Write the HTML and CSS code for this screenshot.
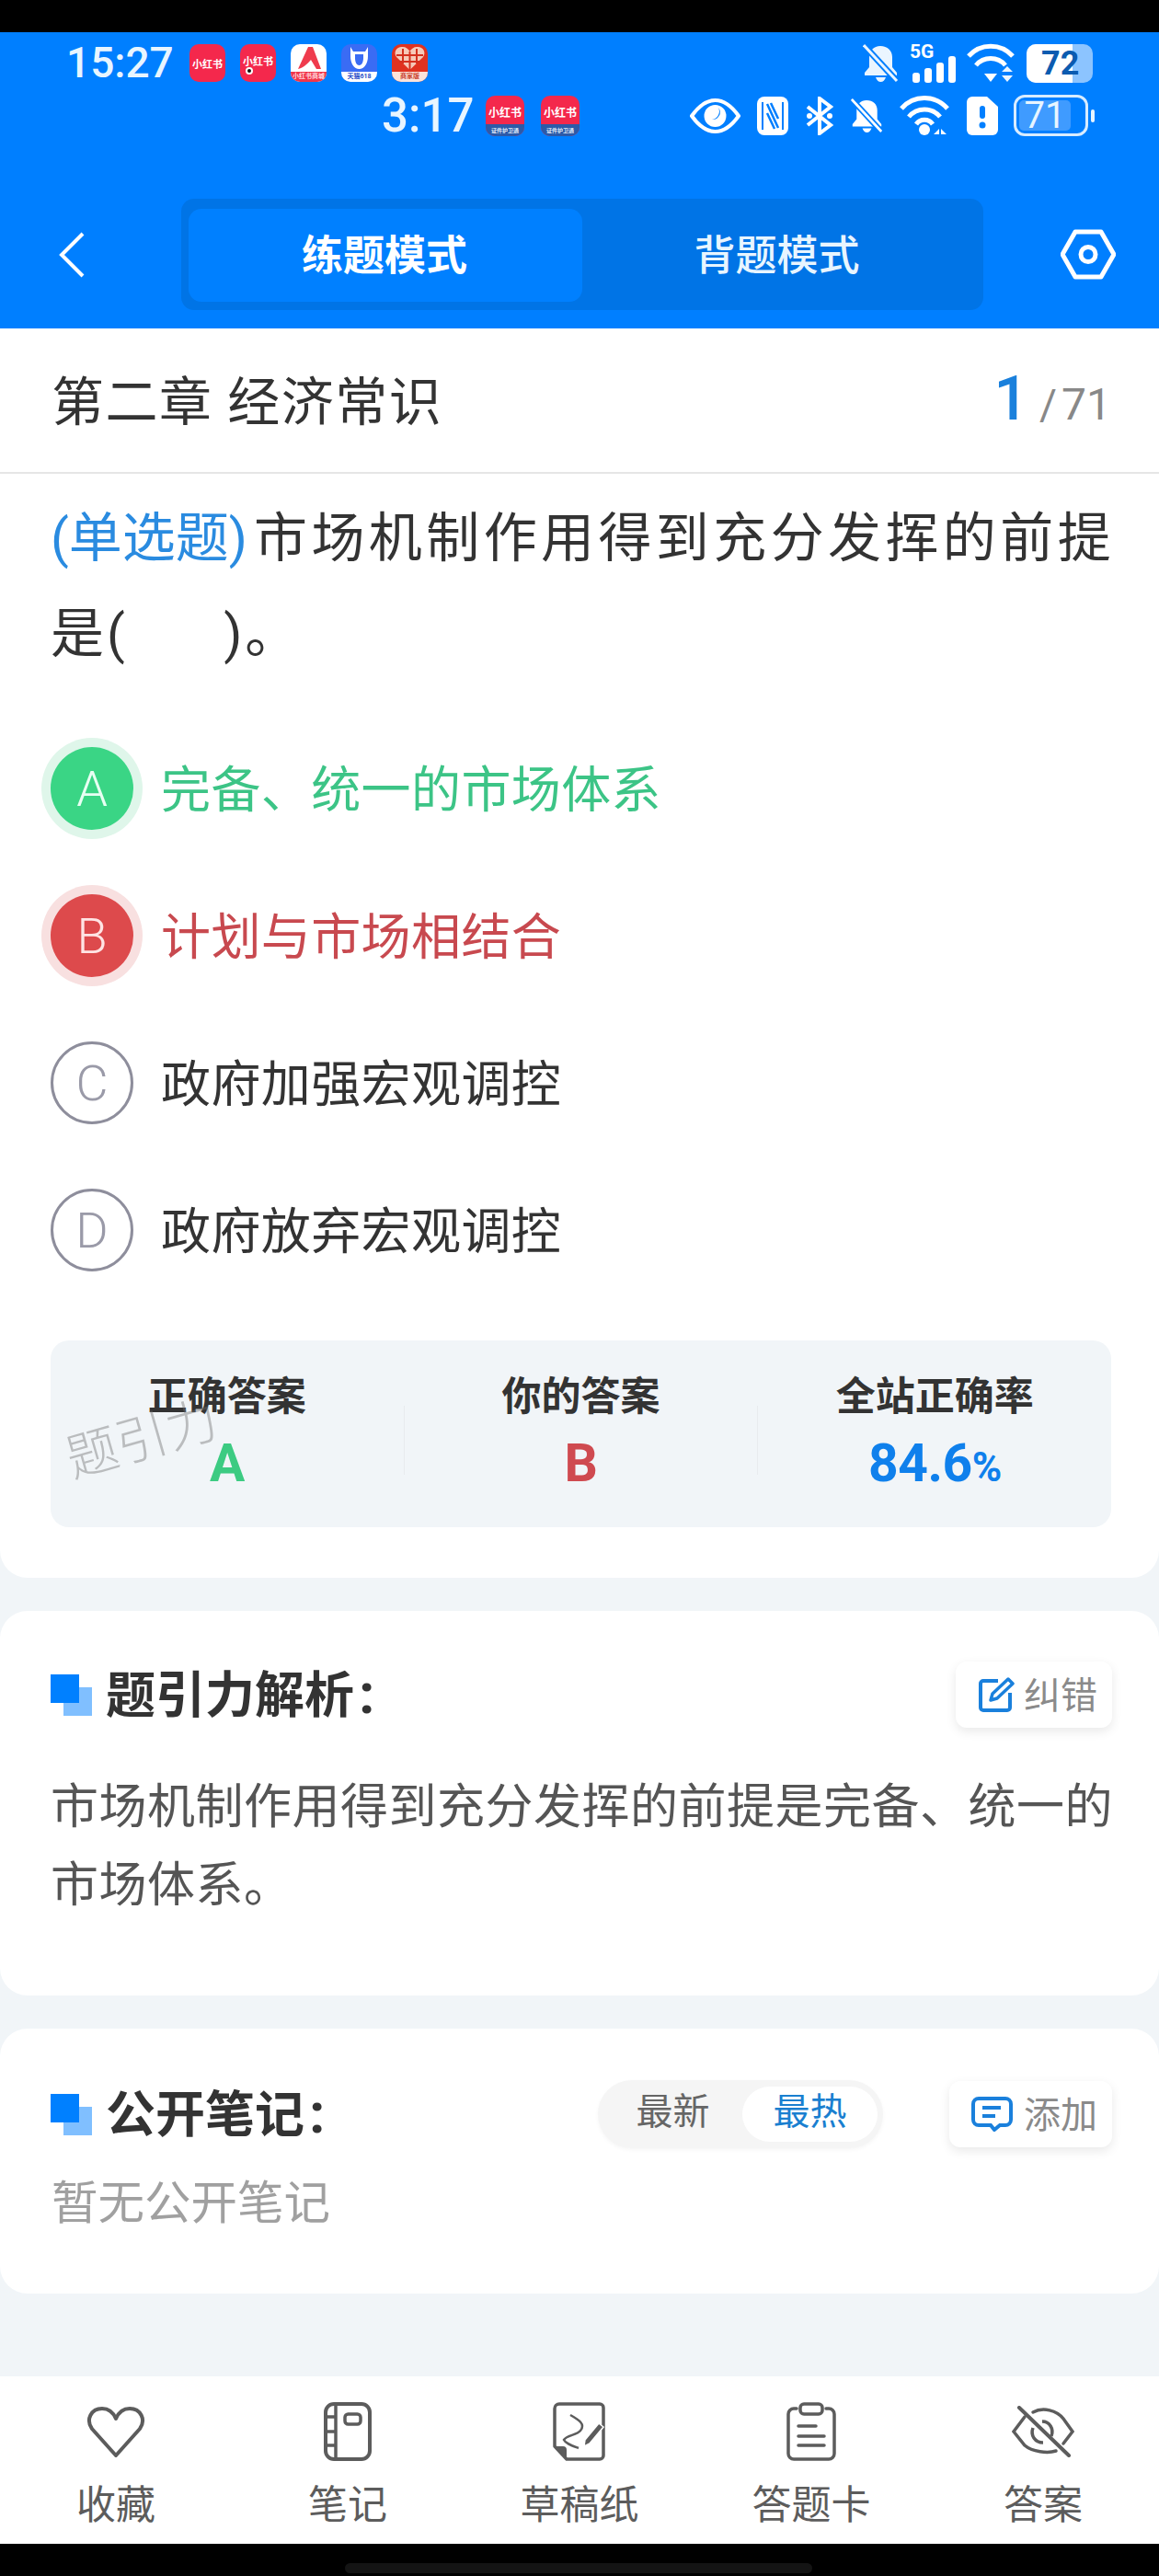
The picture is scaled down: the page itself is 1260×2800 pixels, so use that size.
FILE: index.html
```html
<!DOCTYPE html>
<html lang="zh-CN">
<head>
<meta charset="UTF-8">
<meta name="viewport" content="width=device-width, initial-scale=1.0">
<title>练题模式</title>
<link rel="stylesheet" href="styles.css">
</head>
<body>
<div class="top-black"></div>
<header class="header">
  <!-- first status bar -->
  <div class="status-row first">
    <span class="time">15:27</span>
    <div class="apps">
      <div class="app red">小红书</div>
      <div class="app red dotted">小红书<i class="dot"></i></div>
      <div class="app white-app">
        <svg width="39" height="30" viewBox="0 0 39 30"><path d="M8 27 L19 3 h5 L33 27 h-5 L22 17 C18 22 13 26 8 27z" fill="#ef3b4d"/></svg>
        <span class="strip strip-red">小红书商城</span>
      </div>
      <div class="app blue-app">
        <svg width="39" height="30" viewBox="0 0 39 30"><path d="M10 3 l3 5 h13 l3 -5 v10 c0 8 -4 14 -9.500 14 s-9.500 -6 -9.500 -14z M15 11 v4 c0 5 2 8 4.500 8 s4.500 -3 4.500 -8 v-4z" fill="#fff" fill-rule="evenodd"/></svg>
        <span class="strip strip-white">天猫618</span>
      </div>
      <div class="app heart-app">
        <svg width="39" height="30" viewBox="0 0 39 30"><path d="M19.500 28 L5 14 C1 8 6 2 12 3 c3 0 6 2 7.500 5 C21 5 24 3 27 3 c6 -1 11 5 7 11z" fill="#f6c9b8"/><path d="M12 5 v16 M19.500 8 v20 M27 5 v16 M5 12 h29 M8 19 h23" stroke="#d5311f" stroke-width="2"/></svg>
        <span class="strip strip-pale">商家版</span>
      </div>
    </div>
    <div class="status-icons gap-first">
      <svg width="39" height="43" viewBox="0 0 39 43"><path d="M19 3 c-7 0 -12 5 -12 12 v11 l-5 6 v3 h35 v-3 l-5 -6 v-11 c0 -7 -5 -12 -13 -12z M14 37 h11 c-1 3 -3 5 -5.500 5 s-4.500 -2 -5.500 -5z" fill="#eaf5ff"/><path d="M2 3 L37 41" stroke="#007fff" stroke-width="7"/><path d="M1 2 L37 41" stroke="#eaf5ff" stroke-width="3"/></svg>
      <div class="signal">
        <span class="five-g">5G</span>
        <svg width="47" height="29" viewBox="0 0 47 29"><rect x="0" y="18" width="8" height="11" rx="3" fill="#fff"/><rect x="13" y="13" width="8" height="16" rx="3" fill="#fff"/><rect x="26" y="7" width="8" height="22" rx="3" fill="#fff"/><rect x="39" y="0" width="8" height="29" rx="3" fill="#fff"/></svg>
      </div>
      <svg width="53" height="43" viewBox="0 0 53 43"><path d="M2 14 A32 32 0 0 1 50 14" fill="none" stroke="#fff" stroke-width="5"/><path d="M10 24 A21 21 0 0 1 42 24" fill="none" stroke="#fff" stroke-width="5"/><path d="M19 33 h14 l-7 9z" fill="#fff"/><path d="M38 31 h12 l-6 -6z M38 35 h12 l-6 7z" fill="#eaf5ff"/></svg>
      <div class="battery-solid"><span class="battery-fill">72</span></div>
    </div>
  </div>

  <!-- second status bar -->
  <div class="status-row second">
    <span class="time small">3:17</span>
    <div class="apps apps-two">
      <div class="app tall">小红书<span class="strip strip-navy">证件护卫通</span></div>
      <div class="app tall">小红书<span class="strip strip-navy">证件护卫通</span></div>
    </div>
    <div class="status-icons-two">
      <svg width="55" height="38" viewBox="0 0 55 38"><path d="M2 19 C12 5 20 2 27.500 2 S43 5 53 19 C43 33 35 36 27.500 36 S12 33 2 19z" fill="none" stroke="#fff" stroke-width="4"/><circle cx="27.500" cy="19" r="12" fill="#fff"/><path d="M31 10 a9 9 0 0 1 -7 13 a8 8 0 0 0 7 -13z" fill="#007fff"/></svg>
      <svg width="34" height="42" viewBox="0 0 34 42"><rect width="34" height="42" rx="8" fill="#fff"/><path d="M6 6 V36 M28 6 V36" stroke="#007fff" stroke-width="2"/><path d="M11 8 L23 34 M11 18 L19 35 M15 7 L23 24" stroke="#007fff" stroke-width="2.500"/></svg>
      <svg width="32" height="42" viewBox="0 0 32 42"><path d="M3 11 L28 31 L16 40 V2 L28 11 L3 31" fill="none" stroke="#fff" stroke-width="4"/><circle cx="5" cy="21" r="3" fill="#fff"/><circle cx="27" cy="21" r="3" fill="#fff"/></svg>
      <svg width="35" height="43" viewBox="0 0 39 43"><path d="M19 3 c-7 0 -12 5 -12 12 v11 l-5 6 v3 h35 v-3 l-5 -6 v-11 c0 -7 -5 -12 -13 -12z M14 37 h11 c-1 3 -3 5 -5.500 5 s-4.500 -2 -5.500 -5z" fill="#fff"/><path d="M2 3 L37 41" stroke="#007fff" stroke-width="7"/><path d="M1 2 L37 41" stroke="#fff" stroke-width="3"/></svg>
      <svg width="55" height="43" viewBox="0 0 55 43"><path d="M2 14 A33 33 0 0 1 52 14" fill="none" stroke="#fff" stroke-width="5"/><path d="M10 23 A22 22 0 0 1 44 23" fill="none" stroke="#fff" stroke-width="5"/><path d="M18 31 A11 11 0 0 1 36 31" fill="none" stroke="#fff" stroke-width="5"/><circle cx="27" cy="37" r="6" fill="#fff"/><path d="M37 42 l6 -6 v6z M45 36 l6 6 h-6z" fill="#fff"/></svg>
      <svg width="34" height="42" viewBox="0 0 34 42"><path d="M6 0 H22 L34 11 V36 a6 6 0 0 1 -6 6 H6 a6 6 0 0 1 -6 -6 V6 a6 6 0 0 1 6 -6z" fill="#fff"/><rect x="14" y="10" width="6" height="14" rx="3" fill="#007fff"/><circle cx="17" cy="31" r="3.500" fill="#007fff"/></svg>
      <div class="battery-line"><div class="battery-box"><span class="battery-level">71</span></div><i class="battery-nub"></i></div>
    </div>
  </div>

  <nav class="nav-row">
    <svg class="back" width="28" height="50" viewBox="0 0 28 50"><path d="M26 2 L3 25 L26 48" fill="none" stroke="#fff" stroke-width="4"/></svg>
    <div class="mode-switch">
      <div class="mode active">练题模式</div>
      <div class="mode">背题模式</div>
    </div>
    <svg class="settings" width="60" height="55" viewBox="0 0 60 55"><path d="M16 3 H44 L58 27.500 L44 52 H16 L2 27.500z" fill="none" stroke="#fff" stroke-width="5" stroke-linejoin="round"/><circle cx="30" cy="27.500" r="8" fill="none" stroke="#fff" stroke-width="5"/></svg>
  </nav>
</header>

<main class="main">
  <section class="question-card">
    <div class="chapter-row">
      <div class="chapter-name">第二章 经济常识</div>
      <div class="counter"><span class="counter-now">1</span><span class="counter-sep">/</span><span class="counter-total">71</span></div>
    </div>

    <div class="question">
      <div class="question-line"><span class="question-type">(单选题)</span><span>市场机制作用得到充分发挥的前提</span></div>
      <div class="question-line rest">是(&nbsp;&nbsp;&nbsp;&nbsp;&nbsp;&nbsp;)。</div>
    </div>

    <div class="options">
      <div class="option right"><span class="option-letter">A</span><span class="option-text">完备、统一的市场体系</span></div>
      <div class="option wrong"><span class="option-letter">B</span><span class="option-text">计划与市场相结合</span></div>
      <div class="option"><span class="option-letter">C</span><span class="option-text">政府加强宏观调控</span></div>
      <div class="option"><span class="option-letter">D</span><span class="option-text">政府放弃宏观调控</span></div>
    </div>

    <div class="stats">
      <div class="stat"><div class="stat-label">正确答案</div><div class="stat-value green">A</div></div>
      <div class="stat-line"></div>
      <div class="stat"><div class="stat-label">你的答案</div><div class="stat-value red-text">B</div></div>
      <div class="stat-line"></div>
      <div class="stat"><div class="stat-label">全站正确率</div><div class="stat-value blue-text">84.6<span class="percent">%</span></div></div>
      <div class="watermark">题引力</div>
    </div>
  </section>

  <section class="card analysis-card">
    <div class="card-head">
      <svg class="head-mark" width="45" height="45" viewBox="0 0 45 45"><rect x="14" y="14" width="31" height="31" fill="#80bfff"/><rect width="31" height="31" fill="#0080ff"/></svg>
      <h2 class="card-title">题引力解析<span class="colon">:</span></h2>
      <div class="small-btn">
        <svg width="40" height="40" viewBox="0 0 40 40"><path d="M22 5 H6 a3 3 0 0 0 -3 3 V34 a3 3 0 0 0 3 3 H32 a3 3 0 0 0 3 -3 V18" fill="none" stroke="#1a80dc" stroke-width="4"/><path d="M14 26 l2 -7 L33 3 l5 5 L21 24z" fill="none" stroke="#1a80dc" stroke-width="3.500" stroke-linejoin="round"/></svg>
        <span class="btn-text">纠错</span>
      </div>
    </div>
    <p class="analysis-text">市场机制作用得到充分发挥的前提是完备、统一的市场体系。</p>
  </section>

  <section class="card notes-card">
    <div class="card-head">
      <svg class="head-mark" width="45" height="45" viewBox="0 0 45 45"><rect x="14" y="14" width="31" height="31" fill="#80bfff"/><rect width="31" height="31" fill="#0080ff"/></svg>
      <h2 class="card-title">公开笔记<span class="colon">:</span></h2>
      <div class="sort-switch">
        <span class="sort-item">最新</span>
        <span class="sort-item on">最热</span>
      </div>
      <div class="small-btn add-btn">
        <svg width="45" height="38" viewBox="0 0 45 38"><path d="M8 2 H37 a6 6 0 0 1 6 6 V25 a6 6 0 0 1 -6 6 H31 L25 36 L21 31 H8 a6 6 0 0 1 -6 -6 V8 a6 6 0 0 1 6 -6z" fill="none" stroke="#1a80dc" stroke-width="4"/><path d="M12 12 H32 M12 21 H26" stroke="#1a80dc" stroke-width="4"/></svg>
        <span class="btn-text">添加</span>
      </div>
    </div>
    <p class="empty-notes">暂无公开笔记</p>
  </section>
</main>

<footer class="tabbar">
  <div class="tab">
    <div class="tab-icon"><svg width="64" height="56" viewBox="0 0 64 56"><path d="M32 54 L6 25 C-1 15 5 3 17 3 C24 3 29 7 32 14 C35 7 40 3 47 3 C59 3 65 15 58 25z" fill="none" stroke="#5c5c5c" stroke-width="4" stroke-linejoin="round"/></svg></div>
    <span>收藏</span>
  </div>
  <div class="tab">
    <div class="tab-icon"><svg width="52" height="64" viewBox="0 0 52 64"><rect x="2" y="2" width="48" height="60" rx="9" fill="none" stroke="#5c5c5c" stroke-width="4"/><path d="M13 2 V62 M2 16 H13 M2 32 H13 M2 47 H13" fill="none" stroke="#5c5c5c" stroke-width="3.500"/><rect x="23" y="13" width="17" height="11" rx="3.500" fill="none" stroke="#5c5c5c" stroke-width="3.500"/></svg></div>
    <span>笔记</span>
  </div>
  <div class="tab">
    <div class="tab-icon"><svg width="58" height="64" viewBox="0 0 58 64"><path d="M7 2 H51 a4 4 0 0 1 4 4 V58 a4 4 0 0 1 -4 4 H15 L2 48 V7 a5 5 0 0 1 5 -5z" fill="none" stroke="#5c5c5c" stroke-width="3.500" stroke-linejoin="round"/><path d="M2 48 H11 a4 4 0 0 1 4 4 V62z" fill="#5c5c5c"/><path d="M19 14 C28 19 36 24 30 31 C26 36 15 36 12 41 C14 45 20 47 28 50" fill="none" stroke="#5c5c5c" stroke-width="2.500"/><path d="M34 48 l1 -7 L50 23 l5 4 L40 45z" fill="#5c5c5c" stroke="#fff" stroke-width="1.500"/></svg></div>
    <span>草稿纸</span>
  </div>
  <div class="tab">
    <div class="tab-icon"><svg width="54" height="64" viewBox="0 0 54 64"><path d="M11 7 H8 a6 6 0 0 0 -6 6 V56 a6 6 0 0 0 6 6 H46 a6 6 0 0 0 6 -6 V13 a6 6 0 0 0 -6 -6 H43" fill="none" stroke="#5c5c5c" stroke-width="3.500" stroke-linecap="round"/><rect x="15" y="2" width="24" height="11" rx="4" fill="none" stroke="#5c5c5c" stroke-width="3.500"/><path d="M13 26 H32 M13 37 H41 M13 47 H41" stroke="#5c5c5c" stroke-width="3.500" stroke-linecap="round"/></svg></div>
    <span>答题卡</span>
  </div>
  <div class="tab">
    <div class="tab-icon"><svg width="70" height="56" viewBox="0 0 70 56"><path d="M15 12 L3 28 L15 43 C23 50 40 52 49 49 M24 7 C35 1 50 5 57 14 L67 28 L57 41" fill="none" stroke="#5c5c5c" stroke-width="3.500" stroke-linecap="round"/><path d="M24 24 C21 32 26 40 35 40 M34 17 C42 17 47 25 44 33" fill="none" stroke="#5c5c5c" stroke-width="3.500"/><path d="M9 2 L63 54" stroke="#5c5c5c" stroke-width="4" stroke-linecap="round"/></svg></div>
    <span>答案</span>
  </div>
</footer>

<div class="bottom-black"><div class="home-pill"></div></div>
</body>
</html>
```

FILE: styles.css
```css
* {
  box-sizing: border-box;
}
body {
  margin: 0;
  width: 1260px;
  height: 2800px;
  overflow: hidden;
  background-color: #000;
  font-family: Roboto, "Noto Sans CJK SC", sans-serif;
  color: #333;
}
.top-black {
  height: 35px;
  background-color: #000;
}

/* Blue header with the two status bars */
.header {
  height: 322px;
  padding-top: 12px;
  background-color: #007fff;
  color: #fff;
}
.status-row {
  display: flex;
  align-items: center;
}
.status-row.first {
  height: 43px;
  padding: 0 72px;
}
.status-row.second {
  height: 45px;
  margin-top: 13px;
  padding: 0 70px 0 415px;
}
.time {
  width: 134px;
  font-size: 46px;
  font-weight: 500;
  line-height: 43px;
  color: #e8f5ff;
}
.time.small {
  width: 113px;
  font-size: 51px;
  line-height: 45px;
}
.apps {
  display: flex;
  gap: 16px;
}
.apps-two {
  gap: 18px;
}
.app {
  width: 39px;
  height: 41px;
  border-radius: 10px;
  overflow: hidden;
  display: flex;
  flex-direction: column;
  align-items: center;
  justify-content: center;
  font-size: 11px;
  font-weight: 700;
  white-space: nowrap;
  color: #fff;
  position: relative;
}
.app.red {
  background-color: #f4284c;
}
.app.dotted {
  padding-bottom: 6px;
}
.dot {
  position: absolute;
  left: 6px;
  bottom: 8px;
  width: 8px;
  height: 8px;
  border-radius: 50%;
  background-color: #111;
  border: 2px solid #fff;
}
.white-app {
  background-color: #fff;
  justify-content: flex-start;
}
.blue-app {
  background-color: #3a6cf4;
  justify-content: flex-start;
}
.heart-app {
  background-color: #e0321f;
  justify-content: flex-start;
}
.strip {
  flex: 0 0 11px;
  width: 100%;
  font-size: 7px;
  line-height: 11px;
  text-align: center;
}
.strip-red {
  background-color: #f0364a;
  color: #ffd9dd;
}
.strip-white {
  background-color: #fff;
  color: #2a50c8;
}
.strip-pale {
  background-color: #fbe3da;
  color: #c8402c;
}
.app.tall {
  width: 42px;
  height: 44px;
  background-color: #f4284c;
  justify-content: flex-end;
  gap: 5px;
  font-size: 12px;
}
.strip-navy {
  flex-basis: 13px;
  background-color: #2c5aa8;
  color: #dfe8f8;
  font-size: 6px;
  line-height: 13px;
}
.status-icons {
  display: flex;
  align-items: center;
  gap: 12px;
  margin-left: auto;
}
.signal {
  width: 50px;
  height: 43px;
  position: relative;
  display: flex;
  align-items: flex-end;
  justify-content: flex-end;
}
.five-g {
  position: absolute;
  left: 0;
  top: 0;
  font-size: 21px;
  line-height: 18px;
  font-weight: 700;
  color: #fff;
}
.battery-solid {
  width: 72px;
  height: 42px;
  border-radius: 10px;
  overflow: hidden;
  background-color: #8cc4ff;
}
.battery-fill {
  display: block;
  width: 50px;
  height: 42px;
  padding-left: 16px;
  background-color: #fff;
  color: #0b5bb0;
  font-size: 36px;
  font-weight: 700;
  line-height: 42px;
  white-space: nowrap;
}
.status-icons-two {
  display: flex;
  align-items: center;
  gap: 18px;
  margin-left: auto;
}
.battery-line {
  display: flex;
  align-items: center;
  gap: 3px;
  margin-left: -1px;
}
.battery-box {
  width: 81px;
  height: 45px;
  border: 3px solid #d8ecff;
  border-radius: 12px;
  padding: 3px;
}
.battery-level {
  display: block;
  width: 56px;
  height: 33px;
  background-color: #3f9bff;
  border-radius: 5px;
  color: #e8f5ff;
  font-size: 40px;
  line-height: 33px;
  text-align: center;
}
.battery-nub {
  width: 4px;
  height: 14px;
  border-radius: 2px;
  background-color: #e8f5ff;
}
.nav-row {
  display: flex;
  align-items: center;
  height: 121px;
  margin-top: 68px;
  padding-left: 64px;
}
.back {
  flex: none;
}
.mode-switch {
  display: flex;
  width: 872px;
  height: 121px;
  margin-left: 105px;
  padding: 11px 8px 9px;
  background-color: #0074e6;
  border-radius: 14px;
}
.mode {
  flex: 1;
  display: flex;
  align-items: center;
  justify-content: center;
  padding: 0 5px 6px 0;
  font-size: 45px;
  font-weight: 500;
  color: #e8f5ff;
}
.mode.active {
  flex: 0 0 428px;
  padding: 0 2px 6px 0;
  background-color: #0080ff;
  border-radius: 14px;
  font-weight: 700;
  color: #fff;
}
.settings {
  flex: none;
  margin-left: 84px;
}

/* Content */
.main {
  height: 2226px;
  background-color: #f1f5f8;
}
.question-card {
  height: 1358px;
  background-color: #fff;
  border-radius: 0 0 30px 30px;
  padding: 0 52px 0 55px;
}
.chapter-row {
  display: flex;
  align-items: center;
  justify-content: space-between;
  height: 158px;
  margin: 0 -52px 0 -55px;
  padding: 0 52px 0 56px;
  border-bottom: 2px solid #e6e6e6;
}
.chapter-name {
  padding-bottom: 6px;
  font-size: 57px;
  letter-spacing: 1.5px;
}
.counter {
  display: flex;
  align-items: baseline;
  padding-bottom: 4px;
  color: #888;
}
.counter-now {
  font-size: 66px;
  font-weight: 500;
  color: #1a80dc;
}
.counter-sep {
  font-size: 46px;
  margin-left: 12px;
}
.counter-total {
  font-size: 48px;
  margin-left: 5px;
}
.question {
  margin-top: 18px;
  font-size: 58px;
  line-height: 104px;
  letter-spacing: 4.4px;
  white-space: nowrap;
}
.question-line.rest {
  letter-spacing: 3px;
}
.question-type {
  margin-right: 7px;
  color: #2a8be0;
  letter-spacing: 0;
}
.options {
  display: flex;
  flex-direction: column;
  gap: 70px;
  margin-top: 71px;
}
.option {
  display: flex;
  align-items: center;
  height: 90px;
  gap: 30px;
  font-size: 54px;
}
.option-text {
  padding-bottom: 6px;
  letter-spacing: 0.4px;
}
.option-letter {
  flex: 0 0 90px;
  height: 90px;
  display: flex;
  align-items: center;
  justify-content: center;
  border-radius: 50%;
  border: 3px solid #8e8e9c;
  font-size: 54px;
  font-weight: 300;
  color: #9a9aa8;
}
.option.right {
  color: #3cc486;
}
.option.right .option-letter {
  background-color: #3ad585;
  border: none;
  box-shadow: 0 0 0 10px #dff6ea;
  color: #e8fff3;
}
.option.wrong {
  color: #c8494f;
}
.option.wrong .option-letter {
  background-color: #dd4a4c;
  border: none;
  box-shadow: 0 0 0 10px #f8e0e0;
  color: #ffe4e4;
}
.stats {
  position: relative;
  display: grid;
  grid-template-columns: 1fr 1px 1fr 1px 1fr;
  height: 203px;
  margin-top: 75px;
  background-color: #f1f5f8;
  border-radius: 20px;
}
.stat {
  display: flex;
  flex-direction: column;
  align-items: center;
  padding-top: 33px;
}
.stat-label {
  font-size: 43px;
  font-weight: 700;
  line-height: 56px;
  white-space: nowrap;
}
.stat-value {
  margin-top: 10px;
  font-size: 57px;
  font-weight: 700;
  line-height: 70px;
  letter-spacing: -0.5px;
}
.percent {
  font-size: 44px;
  letter-spacing: -1px;
}
.green {
  color: #3ccb82;
}
.red-text {
  color: #cf4a50;
}
.blue-text {
  color: #0f80ec;
}
.stat-line {
  height: 75px;
  margin-top: 71px;
  background-color: #e8ebee;
}
.watermark {
  position: absolute;
  left: 14px;
  top: 62px;
  font-size: 56px;
  font-weight: 300;
  color: rgba(110, 110, 110, 0.42);
  transform: rotate(-16deg);
  white-space: nowrap;
}
.card {
  margin-top: 36px;
  background-color: #fff;
  border-radius: 30px;
  padding: 55px 51px 0 55px;
}
.analysis-card {
  height: 418px;
}
.notes-card {
  height: 288px;
  padding-top: 56px;
}
.card-head {
  display: flex;
  align-items: center;
  height: 72px;
}
.notes-card .card-head {
  height: 74px;
}
.head-mark {
  flex: none;
}
.card-title {
  margin: 0 0 0 15px;
  padding-bottom: 8px;
  font-size: 54px;
  font-weight: 700;
  white-space: nowrap;
}
.colon {
  margin-left: 5px;
  font-size: 62px;
}
.small-btn {
  display: flex;
  align-items: center;
  gap: 10px;
  height: 72px;
  margin-left: auto;
  padding: 0 16px 0 24px;
  background-color: #fff;
  border-radius: 12px;
  box-shadow: 0 4px 12px rgba(0, 0, 0, 0.09);
  font-size: 40px;
  color: #8a8a8a;
}
.btn-text {
  padding-bottom: 4px;
}
.add-btn {
  margin-left: 72px;
  gap: 12px;
}
.analysis-text {
  margin: 44px -6px 0 0;
  font-size: 52px;
  line-height: 85px;
  letter-spacing: 0.5px;
  color: #555;
}
.sort-switch {
  display: flex;
  align-items: center;
  width: 310px;
  height: 74px;
  margin-left: auto;
  padding: 7px 6px;
  background-color: #f5f5f5;
  border-radius: 37px;
  box-shadow: 0 2px 4px rgba(0, 0, 0, 0.04);
}
.sort-item {
  flex: 1;
  height: 60px;
  line-height: 56px;
  font-size: 40px;
  text-align: center;
  color: #666;
}
.sort-item.on {
  flex: 0 0 147px;
  background-color: #fff;
  border-radius: 30px;
  color: #1a7fd0;
}
.empty-notes {
  margin: 30px 0 0 1px;
  font-size: 50.500px;
  line-height: 60px;
  color: #a0a0a0;
}

/* Bottom tabs */
.tabbar {
  display: grid;
  grid-template-columns: repeat(5, 1fr);
  height: 182px;
  padding-top: 28px;
  background-color: #fff;
}
.tab {
  display: flex;
  flex-direction: column;
  align-items: center;
  font-size: 43px;
  line-height: 56px;
  color: #5c5c5c;
}
.tab-icon {
  display: flex;
  align-items: center;
  justify-content: center;
  height: 64px;
  margin-bottom: 20px;
}
.bottom-black {
  height: 35px;
  padding-top: 21px;
  background-color: #000;
}
.home-pill {
  width: 508px;
  height: 11px;
  margin-left: 375px;
  border-radius: 6px;
  background-color: #141414;
}
```
